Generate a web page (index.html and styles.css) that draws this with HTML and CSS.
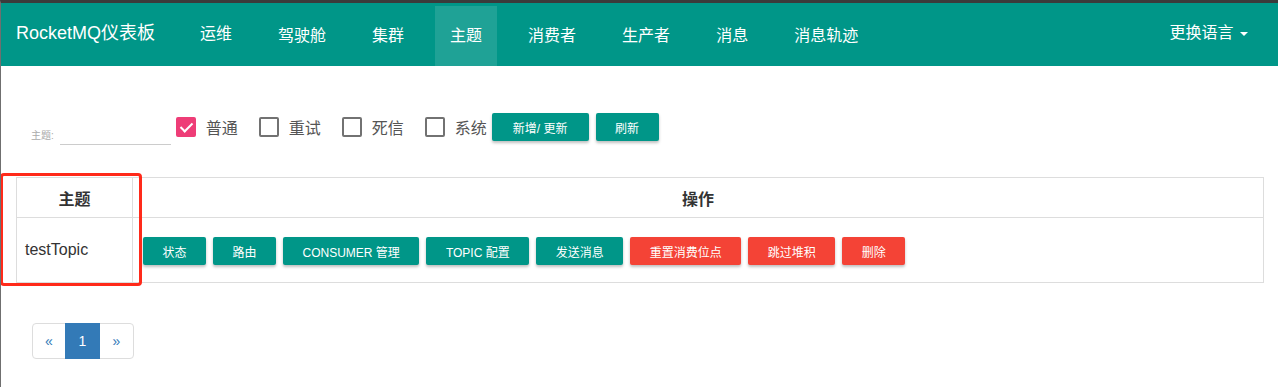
FILE: index.html
```html
<!DOCTYPE html>
<html lang="zh-CN">
<head>
  <meta charset="UTF-8" />
  <meta name="viewport" content="width=device-width, initial-scale=1.0" />
  <title>RocketMQ仪表板 - 主题</title>
  <link rel="stylesheet" href="styles.css">
</head>
<body>
  <!-- Navigation -->
  <nav class="navbar">
    <a class="brand" href="#">RocketMQ仪表板</a>
    <ul class="nav-list">
      <li><a href="#ops" class="nav-up">运维</a></li>
      <li><a href="#dashboard">驾驶舱</a></li>
      <li><a href="#cluster">集群</a></li>
      <li class="active"><a href="#topic">主题</a></li>
      <li><a href="#consumer">消费者</a></li>
      <li><a href="#producer">生产者</a></li>
      <li><a href="#message">消息</a></li>
      <li><a href="#trace">消息轨迹</a></li>
    </ul>
    <a class="lang" href="#">更换语言 <span class="caret"></span></a>
  </nav>

  <main class="content">
    <!-- Filter -->
    <form class="filter-row" onsubmit="return false">
      <div class="search-group">
        <label for="topicFilter">主题:</label>
        <input type="text" id="topicFilter" />
      </div>
      <label class="check checked"><span class="box"></span>普通</label>
      <label class="check"><span class="box"></span>重试</label>
      <label class="check"><span class="box"></span>死信</label>
      <label class="check"><span class="box"></span>系统</label>
      <button class="btn btn-add">新增/ 更新</button>
      <button class="btn">刷新</button>
    </form>

    <!-- Topic table -->
    <table class="topic-table">
      <tr>
        <th class="col-topic">主题</th>
        <th>操作</th>
      </tr>
      <tr>
        <td class="col-topic">testTopic</td>
        <td class="ops">
          <div class="btn-row">
            <button class="btn">状态</button>
            <button class="btn">路由</button>
            <button class="btn">CONSUMER 管理</button>
            <button class="btn">TOPIC 配置</button>
            <button class="btn">发送消息</button>
            <button class="btn btn-danger">重置消费位点</button>
            <button class="btn btn-danger">跳过堆积</button>
            <button class="btn btn-danger">删除</button>
          </div>
        </td>
      </tr>
    </table>

    <!-- Pagination -->
    <ul class="pagination">
      <li><a href="#">&laquo;</a></li>
      <li class="active"><a href="#">1</a></li>
      <li><a href="#">&raquo;</a></li>
    </ul>
  </main>

  <!-- Annotation box -->
  <div class="mark"></div>
</body>
</html>
```

FILE: styles.css
```css
* { box-sizing: border-box; }
body {
  margin: 0;
  min-height: 100vh;
  font-family: "Liberation Sans", "Noto Sans CJK SC", sans-serif;
  color: #333;
  background: #fff;
  border-top: 3px solid #3b3b3b;
  border-left: 1px solid #6f6f6f;
  position: relative;
}
a { text-decoration: none; }

/* Navbar */
.navbar { display: flex; height: 63px; background: #009688; padding: 0 15px; }
.brand { color: #fff; font-size: 18px; line-height: 60px; padding-right: 14px; }
.nav-list { display: flex; list-style: none; margin: 0; padding: 0; flex: 1; }
.nav-list li { margin-left: 16px; margin-top: 3px; }
.nav-list a { display: block; height: 60px; line-height: 60px; padding: 0 15px; color: #fff; font-size: 16px; }
.nav-list a.nav-up { line-height: 56px; }
.nav-list li.active { background: rgba(255,255,255,0.12); }
.lang { color: #fff; font-size: 16px; line-height: 60px; padding: 0 15px; }
.caret { display: inline-block; width: 0; height: 0; margin-left: 2px; vertical-align: middle;
  border-top: 4px solid #fff; border-left: 4px solid transparent; border-right: 4px solid transparent; }

/* Content */
.content { padding: 47px 14px 0 15px; }
.filter-row { display: flex; align-items: center; height: 28px; margin: 0; }
.search-group { display: flex; align-items: flex-end; align-self: flex-end; margin: 0 5px -4px 15px; }
.search-group label { font-size: 10px; color: #aaa; margin-right: 6px; line-height: 12px; padding-bottom: 3px; }
.search-group input { width: 111px; height: 22px; border: none; border-bottom: 1px solid #ccc; outline: none; padding: 0; }
.check { display: flex; align-items: center; font-size: 16px; color: #555; margin-right: 21px; }
.check:nth-of-type(4) { margin-right: 5px; }
.check .box { width: 20px; height: 20px; border: 2px solid #727272; border-radius: 2px; margin-right: 10px; position: relative; }
.check.checked .box { background: #ee3d77; border-color: #ee3d77; }
.check.checked .box::after { content: ""; position: absolute; left: 5px; top: 1px; width: 5px; height: 10px;
  border-right: 2px solid #fff; border-bottom: 2px solid #fff; transform: rotate(45deg); }

.btn { height: 28px; padding: 0 19.5px; border: none; border-radius: 2px; background: #009688; color: #fff;
  font-family: inherit; font-size: 12px; cursor: pointer; box-shadow: 0 2px 3px rgba(0,0,0,0.25); }
.filter-row .btn + .btn { margin-left: 7px; }
.btn-add { padding: 0 21px; }
.btn-danger { background: #f44336; }

/* Table */
.topic-table { width: 100%; border-collapse: collapse; margin-top: 36px; }
.topic-table th, .topic-table td { border: 1px solid #ddd; }
.topic-table th { height: 40px; font-size: 16px; font-weight: bold; text-align: center; }
.topic-table td { height: 65px; font-size: 16px; }
.col-topic { width: 116px; }
td.col-topic { padding-left: 8px; }
td.ops { padding: 0 10px; }
.btn-row { display: flex; gap: 7px; padding-top: 2px; }

/* Pagination */
.pagination { display: flex; list-style: none; margin: 40px 0 0 16px; padding: 0; }
.pagination a { display: block; width: 35px; height: 36px; line-height: 34px; text-align: center;
  border: 1px solid #ddd; margin-left: -1px; color: #337ab7; font-size: 14px; }
.pagination li:first-child a { width: 34px; border-radius: 4px 0 0 4px; margin-left: 0; }
.pagination li:last-child a { border-radius: 0 4px 4px 0; }
.pagination li.active a { background: #337ab7; border-color: #337ab7; color: #fff; position: relative; }

/* Red annotation */
.mark { position: absolute; left: -1px; top: 170px; width: 142px; height: 113px;
  border: 3px solid #ff2a1a; border-radius: 4px; }
```
